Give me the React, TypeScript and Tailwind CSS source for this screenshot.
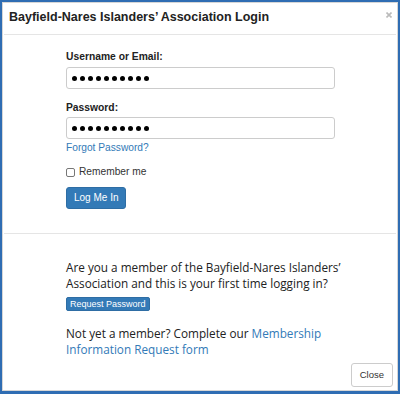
const sans = { fontFamily: '"Liberation Sans", Arial, sans-serif' };

const Dots = () => (
  <div className="flex gap-[3px]">
    {Array.from({ length: 10 }).map((_, i) => (
      <span key={i} className="w-[5px] h-[5px] rounded-full bg-black" />
    ))}
  </div>
);

export default function App() {
  return (
    <div className="w-[400px] h-[394px] border-[2px] border-b-[3px] border-[#2f6db3] bg-white overflow-hidden text-[#333]" style={sans}>
      <div className="h-full border border-[#d6d6d6] flex flex-col">
        {/* En-tête */}
        <div className="h-[32px] flex justify-between pl-[5px] pr-[4px] pt-[7px] mx-[1px] border-b border-[#e5e5e5]">
          <h4 className="text-[12.5px] font-bold text-[#222] leading-[14px]">Bayfield-Nares Islanders’ Association Login</h4>
          <svg className="w-[6px] h-[6px] mt-[2px]" viewBox="0 0 6 6">
            <path d="M0.5 0.5 L5.5 5.5 M5.5 0.5 L0.5 5.5" stroke="#bbb" strokeWidth="1.6" />
          </svg>
        </div>

        {/* Formulaire */}
        <div className="h-[199px] pl-[62px] pt-[16px] mx-[1px] border-b border-[#e5e5e5]">
          <label className="block text-[10.3px] font-bold text-[#222] leading-[12px]">Username or Email:</label>
          <div className="mt-[4px] w-[269px] h-[22px] border border-[#ccc] rounded-[3px] flex items-center pl-[5px]">
            <Dots />
          </div>
          <label className="block mt-[13px] text-[10.3px] font-bold text-[#222] leading-[12px]">Password:</label>
          <div className="mt-[3px] w-[269px] h-[22px] border border-[#ccc] rounded-[3px] flex items-center pl-[5px]">
            <Dots />
          </div>
          <a className="block mt-[3px] text-[10.2px] text-[#337ab7] leading-[12px]">Forgot Password?</a>
          <label className="flex items-center gap-[4px] mt-[12px] text-[10.2px] text-[#333] leading-[12px]">
            <span className="w-[9px] h-[9px] border border-[#777] rounded-[2px] bg-white" />
            Remember me
          </label>
          <button className="mt-[9px] h-[22px] px-[7px] rounded-[3px] bg-[#337ab7] border border-[#2e6da4] text-white text-[10px] leading-none">
            Log Me In
          </button>
        </div>

        {/* Bas de page */}
        <div className="flex-1 flex flex-col pl-[63px] pt-[25px] text-[11.75px] leading-[16px] text-[#222]" style={{ fontFamily: '"Open Sans", sans-serif' }}>
          <p>Are you a member of the Bayfield-Nares Islanders’<br />Association and this is your first time logging in?</p>
          <button className="self-start mt-[6px] h-[14px] px-[3px] rounded-[2px] bg-[#337ab7] border border-[#2e6da4] text-white text-[9px] leading-none" style={sans}>
            Request Password
          </button>
          <p className="mt-[14px]">
            Not yet a member? Complete our <a className="text-[#337ab7]">Membership<br />Information Request form</a>
          </p>
          <div className="flex justify-end pr-[4px] mt-[6px]">
            <button className="h-[24px] px-[8px] rounded-[3px] border border-[#ccc] bg-white text-[9.5px] text-[#333] leading-none" style={sans}>
              Close
            </button>
          </div>
        </div>
      </div>
    </div>
  );
}
